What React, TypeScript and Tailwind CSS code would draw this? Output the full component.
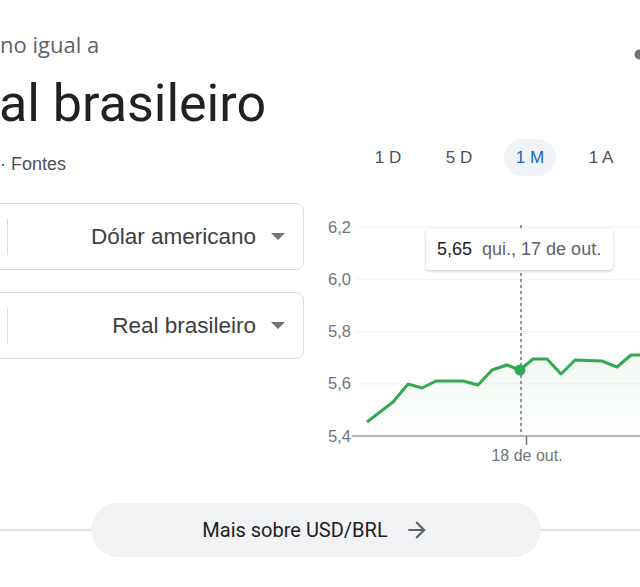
const points: [number, number][] = [
  [367, 422],
  [380, 412],
  [393, 402],
  [408, 384],
  [422, 388],
  [436, 381],
  [463, 381],
  [478, 385],
  [492, 370],
  [507, 365],
  [520, 370],
  [533, 359],
  [547, 359],
  [561, 374],
  [575, 360],
  [602, 361],
  [617, 367],
  [631, 355],
  [645, 355],
];

const yTicks = [
  { label: "6,2", y: 227 },
  { label: "6,0", y: 279.3 },
  { label: "5,8", y: 331.6 },
  { label: "5,6", y: 383.9 },
];

const ranges = ["1 D", "5 D", "1 M", "1 A"];

const chartFont = "Liberation Sans, Arial, sans-serif";

function Select({ label }: { label: string }) {
  return (
    <div className="-ml-[17px] flex h-[67px] w-[321px] items-center rounded-lg border border-[#dadce0] pr-[18px]">
      <div className="ml-[23px] h-[36px] w-px bg-[#dadce0]" />
      <span className="ml-auto text-[22.5px] leading-[26px] text-[#3c4043]">{label}</span>
      <span className="ml-[15px] h-0 w-0 border-x-[7px] border-t-[7px] border-x-transparent border-t-[#70757a]" />
    </div>
  );
}

function Chart() {
  const line = points.map(([x, y], i) => `${i ? "L" : "M"}${x} ${y}`).join(" ");
  const area = `${line} L645 436 L367 436 Z`;

  return (
    <div className="relative mt-[7px] h-[260px] w-[320px]">
      <svg width="320" height="260" viewBox="320 210 320 260" className="block">
        <defs>
          <linearGradient id="fade" x1="0" x2="0" y1="0" y2="1">
            <stop offset="0" stopColor="#34a853" stopOpacity="0.07" />
            <stop offset="1" stopColor="#34a853" stopOpacity="0" />
          </linearGradient>
        </defs>
        {yTicks.map((t) => (
          <g key={t.label}>
            <line x1="356" x2="640" y1={t.y} y2={t.y} stroke="#f1f3f4" strokeWidth="1" />
            <text x="351" y={t.y + 5.5} textAnchor="end" fontSize="16.5" fill="#70757a" fontFamily={chartFont}>
              {t.label}
            </text>
          </g>
        ))}
        <text x="351" y="441.5" textAnchor="end" fontSize="16.5" fill="#70757a" fontFamily={chartFont}>
          5,4
        </text>
        <path d={area} fill="url(#fade)" />
        <line x1="521" x2="521" y1="225" y2="436" stroke="#70757a" strokeWidth="1.5" strokeDasharray="3 3" />
        <path d={line} fill="none" stroke="#34a853" strokeWidth="3" strokeLinejoin="round" />
        <circle cx="520" cy="370" r="5.5" fill="#34a853" />
        <line x1="352" x2="640" y1="436" y2="436" stroke="#9aa0a6" strokeWidth="1.5" />
        <line x1="526.5" x2="526.5" y1="436" y2="445" stroke="#70757a" strokeWidth="1.5" />
        <text x="527" y="461" textAnchor="middle" fontSize="16" fill="#70757a" fontFamily={chartFont}>
          18 de out.
        </text>
      </svg>
      <div className="absolute left-[106px] top-[19px] flex h-[41px] w-[187px] items-center gap-[10px] whitespace-nowrap rounded bg-white px-[11px] text-[18px] shadow-[0_1px_3px_rgba(60,64,67,0.3)]">
        <span className="text-[#202124]">5,65</span>
        <span className="text-[#5f6368]">qui., 17 de out.</span>
      </div>
    </div>
  );
}

export default function App() {
  return (
    <div className="relative h-[587px] w-[640px] overflow-hidden bg-white font-['Liberation_Sans',Arial,sans-serif]">
      <svg className="absolute left-[634px] top-[49px]" width="30" height="11" viewBox="0 0 30 11">
        <circle cx="5.5" cy="5.5" r="5" fill="#70757a" />
        <circle cx="17.5" cy="5.5" r="5" fill="#70757a" />
      </svg>

      <div className="pt-[32px] font-['Open_Sans',sans-serif] text-[22px] leading-[25px] text-[#5f6368]">no igual a</div>
      <div className="-ml-[1px] mt-[15px] font-['Roboto',sans-serif] text-[52px] leading-[64px] text-[#202124]">al brasileiro</div>

      <div className="mt-[3px] flex items-start">
        <div className="w-[362px] pt-[15px] text-[18px] leading-[20px] text-[#4d5156]">· Fontes</div>
        <div className="flex gap-[19px]">
          {ranges.map((r) => (
            <div
              key={r}
              className={
                r === "1 M"
                  ? "flex h-[37px] w-[52px] items-center justify-center rounded-full bg-[#f0f4f9] text-[17px] text-[#1a5fd0]"
                  : "flex h-[37px] w-[52px] items-center justify-center rounded-full text-[17px] text-[#4d5156]"
              }
            >
              {r}
            </div>
          ))}
        </div>
      </div>

      <div className="mt-[27px] flex">
        <div className="flex w-[304px] flex-col gap-[22px]">
          <Select label="Dólar americano" />
          <Select label="Real brasileiro" />
        </div>
        <div className="ml-[16px]">
          <Chart />
        </div>
      </div>

      <div className="relative mt-[33px] flex justify-center">
        <div className="absolute inset-x-0 top-1/2 h-[2px] -translate-y-1/2 bg-[#e0e0e0]" />
        <div className="relative ml-[-8px] flex h-[54px] w-[450px] items-center justify-center gap-[16px] rounded-full bg-[#f1f3f4] font-['Roboto',sans-serif] text-[20px] text-[#202124]">
          <span>Mais sobre USD/BRL</span>
          <svg width="26" height="26" viewBox="0 0 24 24" fill="#5f6368">
            <path d="M12 4l-1.41 1.41L16.17 11H4v2h12.17l-5.58 5.59L12 20l8-8z" />
          </svg>
        </div>
      </div>
    </div>
  );
}
